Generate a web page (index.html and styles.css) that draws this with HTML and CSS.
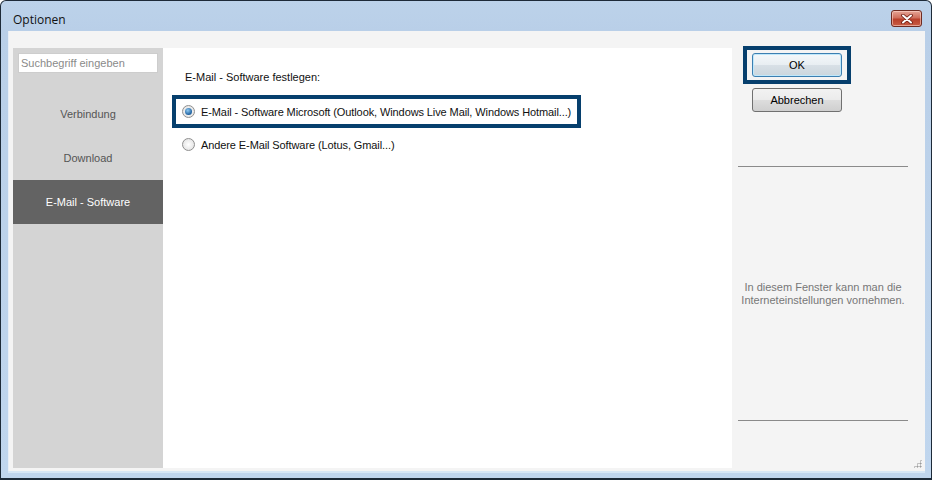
FILE: index.html
```html
<!DOCTYPE html>
<html lang="de">
<head>
  <meta charset="UTF-8" />
  <title>Optionen</title>
  <link rel="stylesheet" href="styles.css">
</head>
<body>
  <div class="window">
    <div class="titlebar">
      <span class="title">Optionen</span>
      <button class="close-btn" title="Schließen">
        <svg width="14" height="10" viewBox="0 0 14 10">
          <path d="M3 1.5 L11 8.5 M11 1.5 L3 8.5" stroke="#6b1a10" stroke-width="3.6" stroke-linecap="round"/>
          <path d="M3 1.5 L11 8.5 M11 1.5 L3 8.5" stroke="#ffffff" stroke-width="2" stroke-linecap="round"/>
        </svg>
      </button>
    </div>

    <div class="client">
      <div class="left-area">
        <!-- Menü links -->
        <div class="sidebar">
          <input type="text" class="search" placeholder="Suchbegriff eingeben">
          <div class="menu-item">Verbindung</div>
          <div class="menu-item">Download</div>
          <div class="menu-item active">E-Mail - Software</div>
        </div>

        <!-- Inhalt -->
        <div class="content">
          <div class="content-label">E-Mail - Software festlegen:</div>
          <div class="option focused">
            <span class="radio checked"></span>
            E-Mail - Software Microsoft (Outlook, Windows Live Mail, Windows Hotmail...)
          </div>
          <div class="option">
            <span class="radio"></span>
            Andere E-Mail Software (Lotus, Gmail...)
          </div>
        </div>
      </div>

      <!-- Rechte Spalte -->
      <div class="side-panel">
        <div class="focus-box">
          <button class="btn">OK</button>
        </div>
        <button class="btn btn-cancel">Abbrechen</button>
        <hr class="sep">
        <p class="hint">In diesem Fenster kann man die Interneteinstellungen vornehmen.</p>
        <hr class="sep">
      </div>
      <span class="grip"></span>
    </div>
  </div>
</body>
</html>
```

FILE: styles.css
```css
body {
  margin: 0;
  padding: 0;
  font-family: "Liberation Sans", Arial, sans-serif;
  background: #ffffff;
}
.window {
  width: 932px;
  height: 480px;
  box-sizing: border-box;
  border: 1px solid #1d2a38;
  border-bottom-width: 2px;
  border-radius: 6px 6px 0 0;
  background: linear-gradient(#bcd2ea, #b9cfe8 30px, #c0d6ee);
  display: flex;
  flex-direction: column;
}
.titlebar {
  height: 30px;
  display: flex;
  align-items: center;
  justify-content: space-between;
  padding: 0 9px 0 12px;
  flex-shrink: 0;
}
.title {
  font-family: "Open Sans", "Liberation Sans", sans-serif;
  font-size: 12px;
  color: #111;
  margin-top: 6px;
}
.close-btn {
  width: 31px;
  height: 17px;
  margin-top: 5px;
  padding: 0;
  border: 1px solid #6e2b22;
  border-radius: 3px;
  background: linear-gradient(#e6a596, #cf6f5d 45%, #b9402b 55%, #c95d45);
  box-shadow: inset 0 0 0 1px rgba(255, 220, 210, 0.55);
  display: flex;
  align-items: center;
  justify-content: center;
}
.client {
  flex: 1;
  margin: 0 6px 7px 7px;
  background: #f4f4f4;
  border-left: 1px solid #e8eef6;
  display: flex;
  position: relative;
  box-shadow: 0 2px 0 #d7e7f6;
}
.left-area {
  display: flex;
  padding: 17px 0 3px 4px;
}
.sidebar {
  width: 150px;
  background: #d4d4d4;
  padding-top: 5px;
  box-sizing: border-box;
}
.search {
  display: block;
  box-sizing: border-box;
  width: 140px;
  height: 20px;
  margin: 0 0 19px 5px;
  border: 1px solid #cdcdcd;
  background: #fff;
  padding: 0 2px;
  font-family: inherit;
  font-size: 11px;
  outline: none;
}
.search::placeholder { color: #8a8a8a; }
.menu-item {
  height: 44px;
  display: flex;
  align-items: center;
  justify-content: center;
  font-size: 11px;
  color: #555;
}
.menu-item.active {
  background: #636363;
  color: #fff;
}
.content {
  width: 569px;
  background: #fff;
  padding: 21px 0 0 9px;
  box-sizing: border-box;
  font-size: 11px;
  color: #111;
}
.content-label {
  margin-left: 13px;
  height: 26px;
  line-height: 16px;
}
.option {
  display: flex;
  align-items: center;
  height: 25px;
  width: 395px;
  padding-left: 6px;
  border: 4px solid transparent;
  white-space: nowrap;
  letter-spacing: -0.1px;
}
.option.focused {
  border-color: #063f6d;
}
.radio {
  width: 11px;
  height: 11px;
  flex-shrink: 0;
  border-radius: 50%;
  border: 1px solid #8f8f8f;
  background: radial-gradient(#ffffff, #dcdcdc);
  margin-right: 6px;
  position: relative;
}
.radio.checked::after {
  content: "";
  position: absolute;
  left: 2px;
  top: 2px;
  width: 7px;
  height: 7px;
  border-radius: 50%;
  background: radial-gradient(circle at 40% 35%, #8fcaf2, #1d5f9e 70%, #174a7c);
}
.side-panel {
  width: 193px;
  box-sizing: border-box;
  padding: 15px 0 0 6px;
  display: flex;
  flex-direction: column;
}
.focus-box {
  width: 108px;
  box-sizing: border-box;
  margin-left: 5px;
  border: 4px solid #063f6d;
  padding: 3px 5px;
}
.btn {
  width: 90px;
  height: 24px;
  border: 1px solid #707070;
  border-radius: 3px;
  background: linear-gradient(#f2f2f2, #ebebeb 50%, #dddddd 51%, #cfcfcf);
  font-family: inherit;
  font-size: 11px;
  color: #000;
  padding: 0;
}
.focus-box .btn {
  border-color: #3c7fb1;
  background: linear-gradient(#f4f8fa, #e8eef2 50%, #d8e0e6 51%, #cbd6dd);
  box-shadow: inset 0 0 0 1px #bfe8fb;
}
.btn-cancel {
  margin: 4px 0 0 14px;
}
.sep {
  width: 170px;
  margin: 54px 0 0 0;
  border: none;
  border-top: 1px solid #8a8a8a;
}
.hint {
  width: 170px;
  height: 253px;
  margin: 0;
  display: flex;
  align-items: center;
  justify-content: center;
  text-align: center;
  font-size: 11px;
  line-height: 13px;
  color: #777;
}
.hint + .sep {
  margin-top: 0;
}
.grip {
  position: absolute;
  right: 3px;
  bottom: 3px;
  width: 9px;
  height: 9px;
  background:
    radial-gradient(circle, #9a9a9a 45%, transparent 50%) 0 0 / 3px 3px;
  clip-path: polygon(100% 0, 100% 100%, 0 100%);
}
```
